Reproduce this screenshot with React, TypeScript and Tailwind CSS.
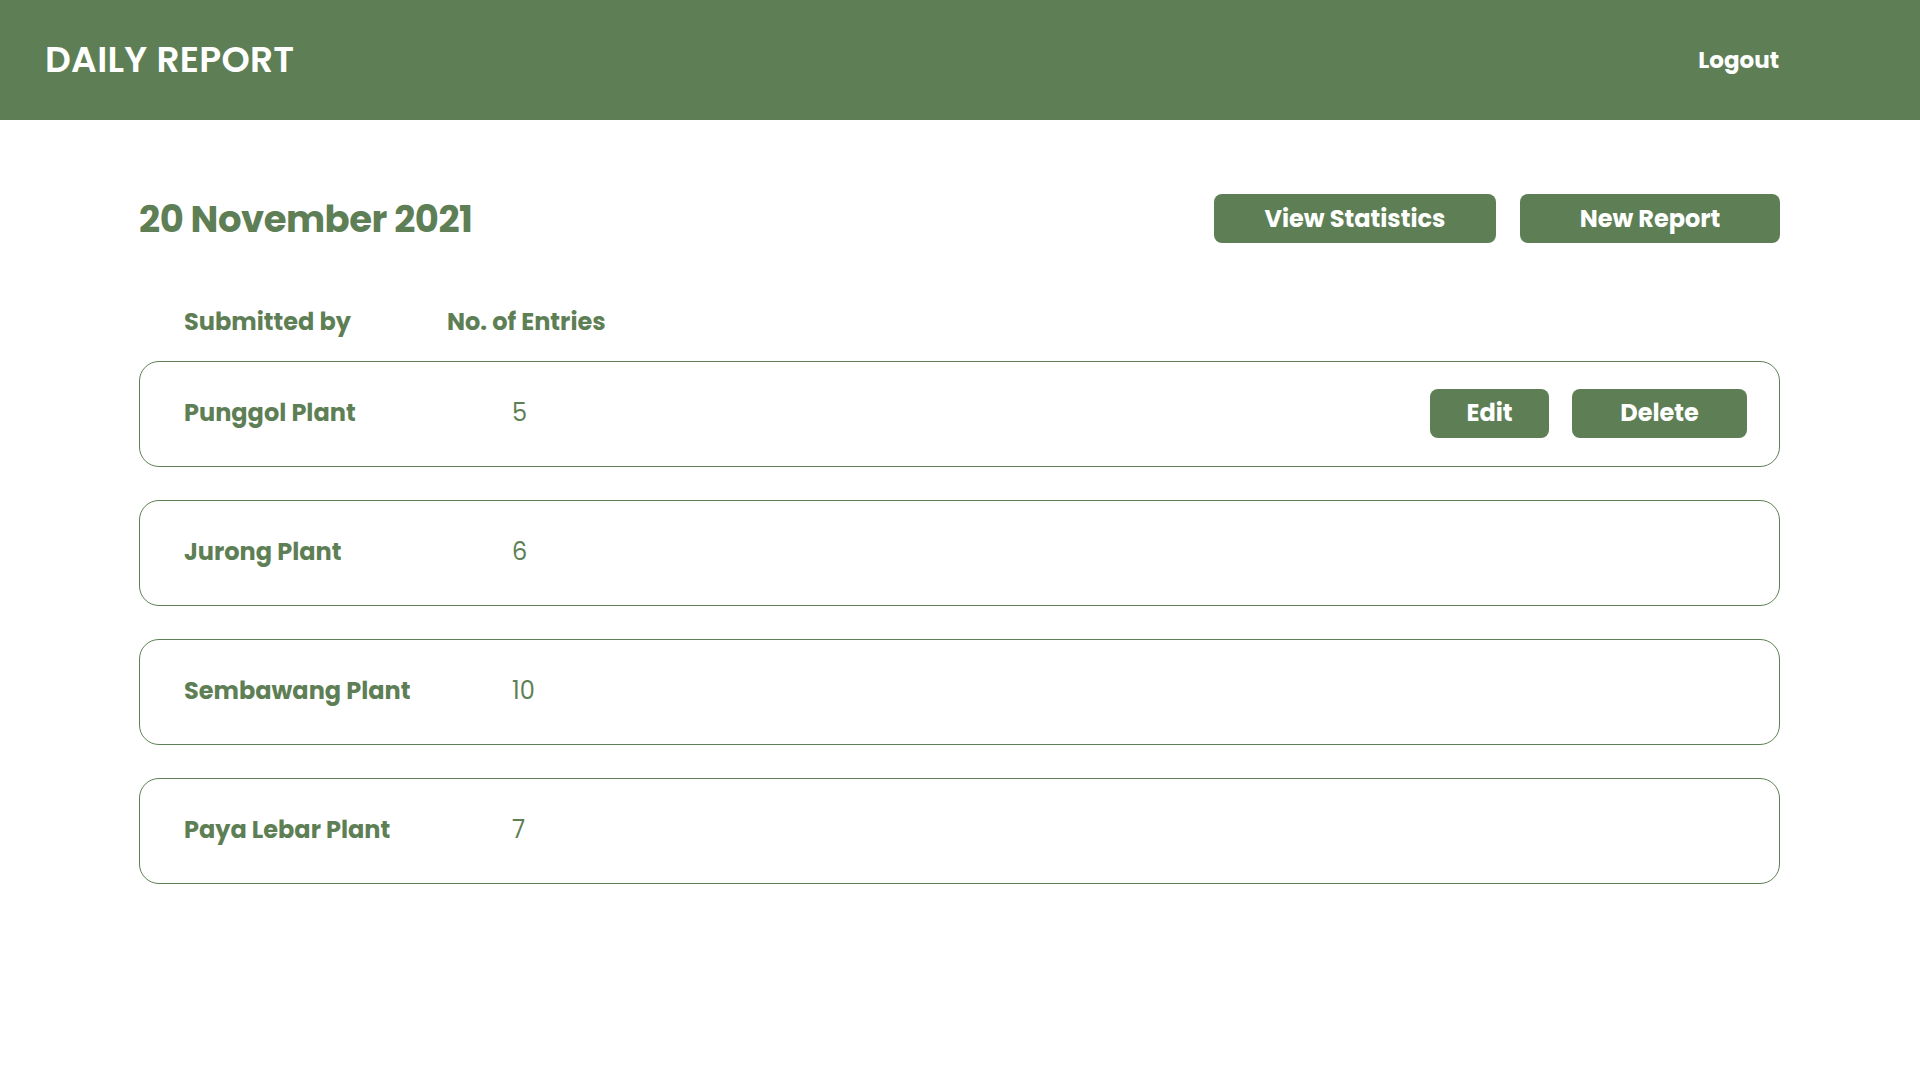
import React from 'react';

interface ReportRow {
  id: number;
  plant: string;
  entries: number;
  editable: boolean;
}

const rows: ReportRow[] = [
  { id: 1, plant: 'Punggol Plant', entries: 5, editable: true },
  { id: 2, plant: 'Jurong Plant', entries: 6, editable: false },
  { id: 3, plant: 'Sembawang Plant', entries: 10, editable: false },
  { id: 4, plant: 'Paya Lebar Plant', entries: 7, editable: false },
];

const font = "font-['Poppins','Open_Sans','Liberation_Sans',sans-serif]";

export default function App() {
  return (
    <div className={`min-h-screen bg-white ${font}`}>
      {/* header bar */}
      <header className="h-[120px] bg-[#5e7f55] flex items-center justify-between pl-[45px] pr-[141px]">
        <h1 className="text-[36px] font-semibold tracking-[0.3px] text-white leading-none">DAILY REPORT</h1>
        <button className="text-[23px] font-bold text-white">Logout</button>
      </header>

      <main className="pt-[74px] pl-[139px] pr-[140px]">
        <div className="flex items-center justify-between h-[49px]">
          <h2 className="text-[37px] font-bold text-[#5e7f55] tracking-[-0.5px] mt-[3px]">20 November 2021</h2>
          <div className="flex gap-[24px]">
            <button className="w-[282px] h-[49px] rounded-[8px] bg-[#5e7f55] text-white text-[24px] font-bold">
              View Statistics
            </button>
            <button className="w-[260px] h-[49px] rounded-[8px] bg-[#5e7f55] text-white text-[24px] font-bold">
              New Report
            </button>
          </div>
        </div>

        {/* column titles */}
        <div className="h-[118px] flex items-end pb-[22px] pl-[45px] text-[24px] font-bold text-[#5e7f55] leading-[34px] whitespace-nowrap">
          <div className="w-[263px]">Submitted by</div>
          <div>No. of Entries</div>
        </div>

        <div className="flex flex-col gap-[33px]">
          {rows.map((row) => (
            <div
              key={row.id}
              className="h-[106px] border border-[#5e7f55] rounded-[20px] flex items-center pl-[44px] pr-[32px]"
            >
              <div className="w-[328px] text-[24px] font-bold text-[#5e7f55] -mt-[3px]">{row.plant}</div>
              <div className="text-[24px] text-[#5e7f55] -mt-[3px]">{row.entries}</div>
              {row.editable && (
                <div className="ml-auto flex gap-[23px] -mt-[2px]">
                  <button className="w-[119px] h-[49px] rounded-[8px] bg-[#5e7f55] text-white text-[24px] font-bold">
                    Edit
                  </button>
                  <button className="w-[175px] h-[49px] rounded-[8px] bg-[#5e7f55] text-white text-[24px] font-bold">
                    Delete
                  </button>
                </div>
              )}
            </div>
          ))}
        </div>
      </main>
    </div>
  );
}
